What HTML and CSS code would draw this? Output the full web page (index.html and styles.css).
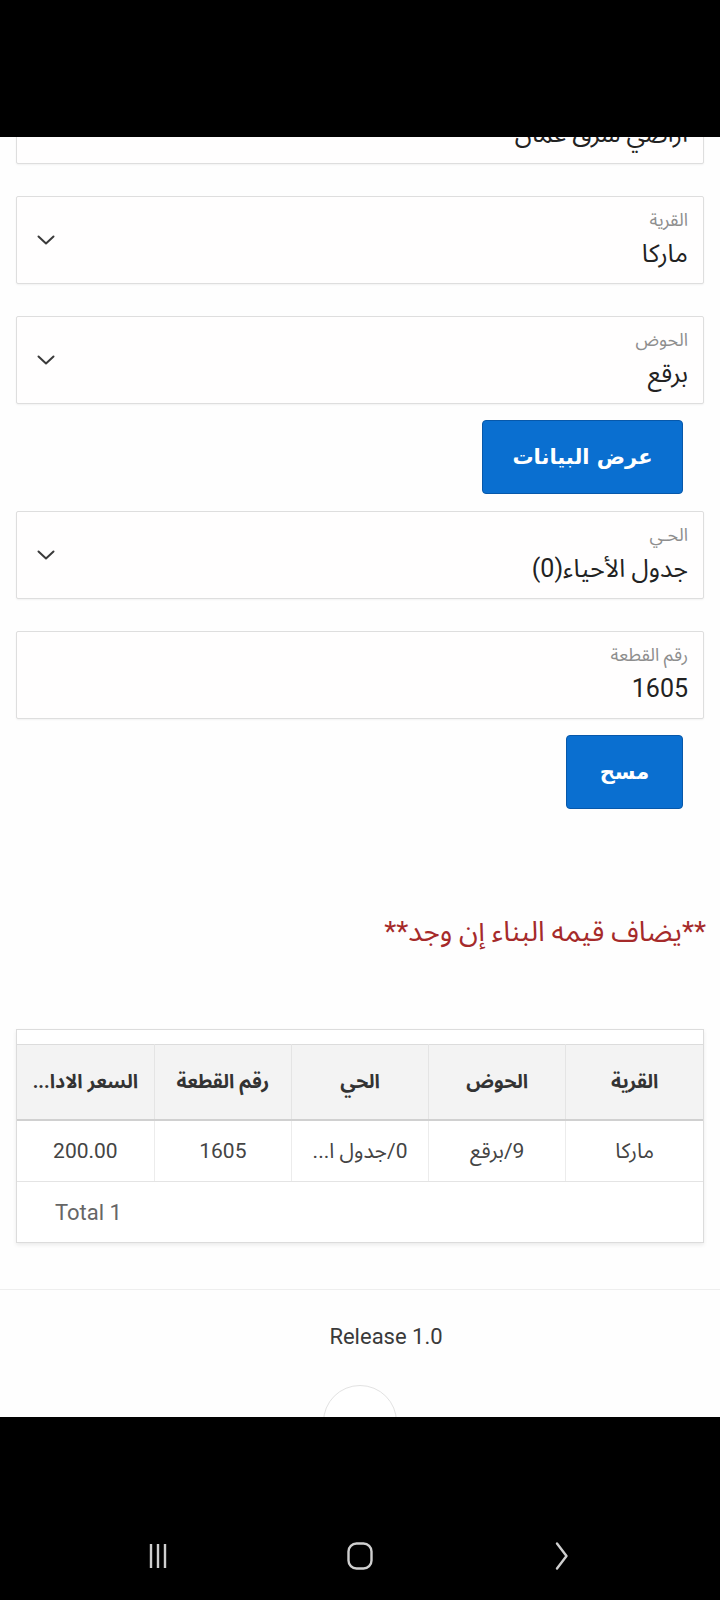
FILE: index.html
```html
<!DOCTYPE html>
<html lang="ar">
<head>
<meta charset="utf-8">
<title>الأراضي</title>
<link rel="stylesheet" href="styles.css">
</head>
<body>
<div class="statusbar"></div>

<main class="page" dir="rtl">
  <div class="field">
    <div class="field-text">
      <div class="field-label">المديرية</div>
      <div class="field-value">اراضي شرق عمان</div>
    </div>
    <svg class="chevron" width="18" height="10" viewBox="0 0 18 10"><path d="M1.5 1.5 L9 8.5 L16.5 1.5" fill="none" stroke="#3a3a3a" stroke-width="2" stroke-linecap="round" stroke-linejoin="round"/></svg>
  </div>

  <div class="field">
    <div class="field-text">
      <div class="field-label">القرية</div>
      <div class="field-value">ماركا</div>
    </div>
    <svg class="chevron" width="18" height="10" viewBox="0 0 18 10"><path d="M1.5 1.5 L9 8.5 L16.5 1.5" fill="none" stroke="#3a3a3a" stroke-width="2" stroke-linecap="round" stroke-linejoin="round"/></svg>
  </div>

  <div class="field">
    <div class="field-text">
      <div class="field-label">الحوض</div>
      <div class="field-value">برقع</div>
    </div>
    <svg class="chevron" width="18" height="10" viewBox="0 0 18 10"><path d="M1.5 1.5 L9 8.5 L16.5 1.5" fill="none" stroke="#3a3a3a" stroke-width="2" stroke-linecap="round" stroke-linejoin="round"/></svg>
  </div>

  <div class="actions">
    <button class="btn btn-wide" type="button">عرض البيانات</button>
  </div>

  <div class="field field-after-btn">
    <div class="field-text">
      <div class="field-label">الحـي</div>
      <div class="field-value">جدول الأحياء(0)</div>
    </div>
    <svg class="chevron" width="18" height="10" viewBox="0 0 18 10"><path d="M1.5 1.5 L9 8.5 L16.5 1.5" fill="none" stroke="#3a3a3a" stroke-width="2" stroke-linecap="round" stroke-linejoin="round"/></svg>
  </div>

  <div class="field">
    <div class="field-text">
      <div class="field-label">رقم القطعة</div>
      <div class="field-value">1605</div>
    </div>
  </div>

  <div class="actions">
    <button class="btn btn-small" type="button">مسح</button>
  </div>

  <p class="note">**يضاف قيمه البناء إن وجد**</p>

  <section class="card">
    <table class="grid">
      <thead>
        <tr>
          <th>القرية</th>
          <th>الحوض</th>
          <th>الحي</th>
          <th>رقم القطعة</th>
          <th>السعر الادا...</th>
        </tr>
      </thead>
      <tbody>
        <tr>
          <td>ماركا</td>
          <td>9/برقع</td>
          <td>0/جدول ا...</td>
          <td>1605</td>
          <td>200.00</td>
        </tr>
      </tbody>
    </table>
    <div class="total" dir="ltr">Total 1</div>
  </section>
</main>

<footer class="footer">
  <div class="release">Release 1.0</div>
  <div class="fab"></div>
</footer>

<div class="navbar">
  <svg class="nav-icon" width="30" height="30" viewBox="0 0 30 30"><path d="M8 3 V27 M15 3 V27 M22 3 V27" stroke="#cfcfcf" stroke-width="2.4" fill="none"/></svg>
  <svg class="nav-icon" width="30" height="30" viewBox="0 0 30 30"><rect x="3.5" y="2.5" width="23" height="25" rx="8" ry="8" stroke="#cfcfcf" stroke-width="2.4" fill="none"/></svg>
  <svg class="nav-icon" width="30" height="30" viewBox="0 0 30 30"><path d="M10 2.5 L19.5 15 L10 27.5" stroke="#cfcfcf" stroke-width="2.4" fill="none" stroke-linecap="round" stroke-linejoin="round"/></svg>
</div>
</body>
</html>
```

FILE: styles.css
```css
* { box-sizing: border-box; }

html, body {
  margin: 0;
  padding: 0;
  background: #fefefe;
}

body {
  width: 720px;
  font-family: Roboto, "Noto Sans Arabic", "Noto Naskh Arabic", "DejaVu Sans", "Noto Sans", sans-serif;
  color: #222;
}

.statusbar {
  position: fixed;
  top: 0;
  left: 0;
  width: 720px;
  height: 137px;
  background: #000;
  z-index: 10;
}

.page {
  padding: 76px 16px 0 16px;
  display: flex;
  flex-direction: column;
}

.field {
  height: 88px;
  border: 1px solid #dedede;
  border-radius: 2px;
  background: #fffefe;
  box-shadow: 0 1px 2px rgba(0, 0, 0, 0.05);
  display: flex;
  align-items: center;
  justify-content: space-between;
  padding: 0 15px 0 20px;
}

.field + .field { margin-top: 32px; }
.field-after-btn { margin-top: 0; }

.field-text {
  display: flex;
  flex-direction: column;
  text-align: right;
}

.field-label {
  font-size: 18px;
  line-height: 22px;
  color: #8e8e8e;
}

.field-value {
  margin-top: 6px;
  font-size: 25px;
  line-height: 34px;
  color: #222;
}

.chevron { display: block; flex: none; }

.actions {
  display: flex;
  justify-content: flex-start;
  padding-right: 21px;
  margin: 16px 0 17px;
}

.btn {
  height: 74px;
  border: 1px solid #0758aa;
  border-radius: 4px;
  background: #0a6fd0;
  color: #fff;
  font-family: "DejaVu Sans", sans-serif;
  font-weight: bold;
  font-size: 21px;
  padding: 0;
}

.btn-wide { width: 201px; }
.btn-small { width: 117px; }

.note {
  margin: 88px -2px 0 0;
  font-size: 28px;
  line-height: 36px;
  color: #a52a2a;
  text-align: right;
}

.card {
  margin-top: 79px;
  border: 1px solid #dcdcdc;
  background: #fff;
  box-shadow: 0 2px 4px rgba(0, 0, 0, 0.08);
  padding-top: 14px;
}

.grid {
  width: 100%;
  border-collapse: collapse;
  table-layout: fixed;
  direction: rtl;
}

.grid th {
  height: 75px;
  background: #f3f3f3;
  border-top: 1px solid #dcdcdc;
  border-bottom: 2px solid #d0d0d0;
  border-left: 1px solid #e4e4e4;
  font-size: 19.5px;
  font-weight: bold;
  color: #333;
  text-align: center;
  padding: 0 8px;
  white-space: nowrap;
}

.grid td {
  height: 62px;
  border-bottom: 1px solid #e4e4e4;
  border-left: 1px solid #ececec;
  font-size: 21px;
  color: #444;
  text-align: center;
  padding: 0 8px;
  white-space: nowrap;
}

.grid th:last-child, .grid td:last-child { border-left: none; }

.total {
  height: 60px;
  display: flex;
  align-items: center;
  padding-left: 38px;
  font-size: 22px;
  color: #666;
}

.footer {
  margin-top: 46px;
  border-top: 1px solid #eeeeee;
  padding-top: 33px;
  display: flex;
  flex-direction: column;
  align-items: center;
}

.release {
  margin-left: 52px;
  font-size: 22px;
  line-height: 28px;
  color: #3a3a3a;
}

.fab {
  margin-top: 34px;
  width: 74px;
  height: 74px;
  border-radius: 50%;
  border: 1px solid #e2e2e2;
  background: #fff;
}

.navbar {
  position: fixed;
  left: 0;
  bottom: 0;
  width: 720px;
  height: 183px;
  background: #000;
  display: flex;
  justify-content: center;
  align-items: flex-start;
  gap: 172px;
  padding-top: 124px;
  z-index: 10;
}

.nav-icon { display: block; }
```
